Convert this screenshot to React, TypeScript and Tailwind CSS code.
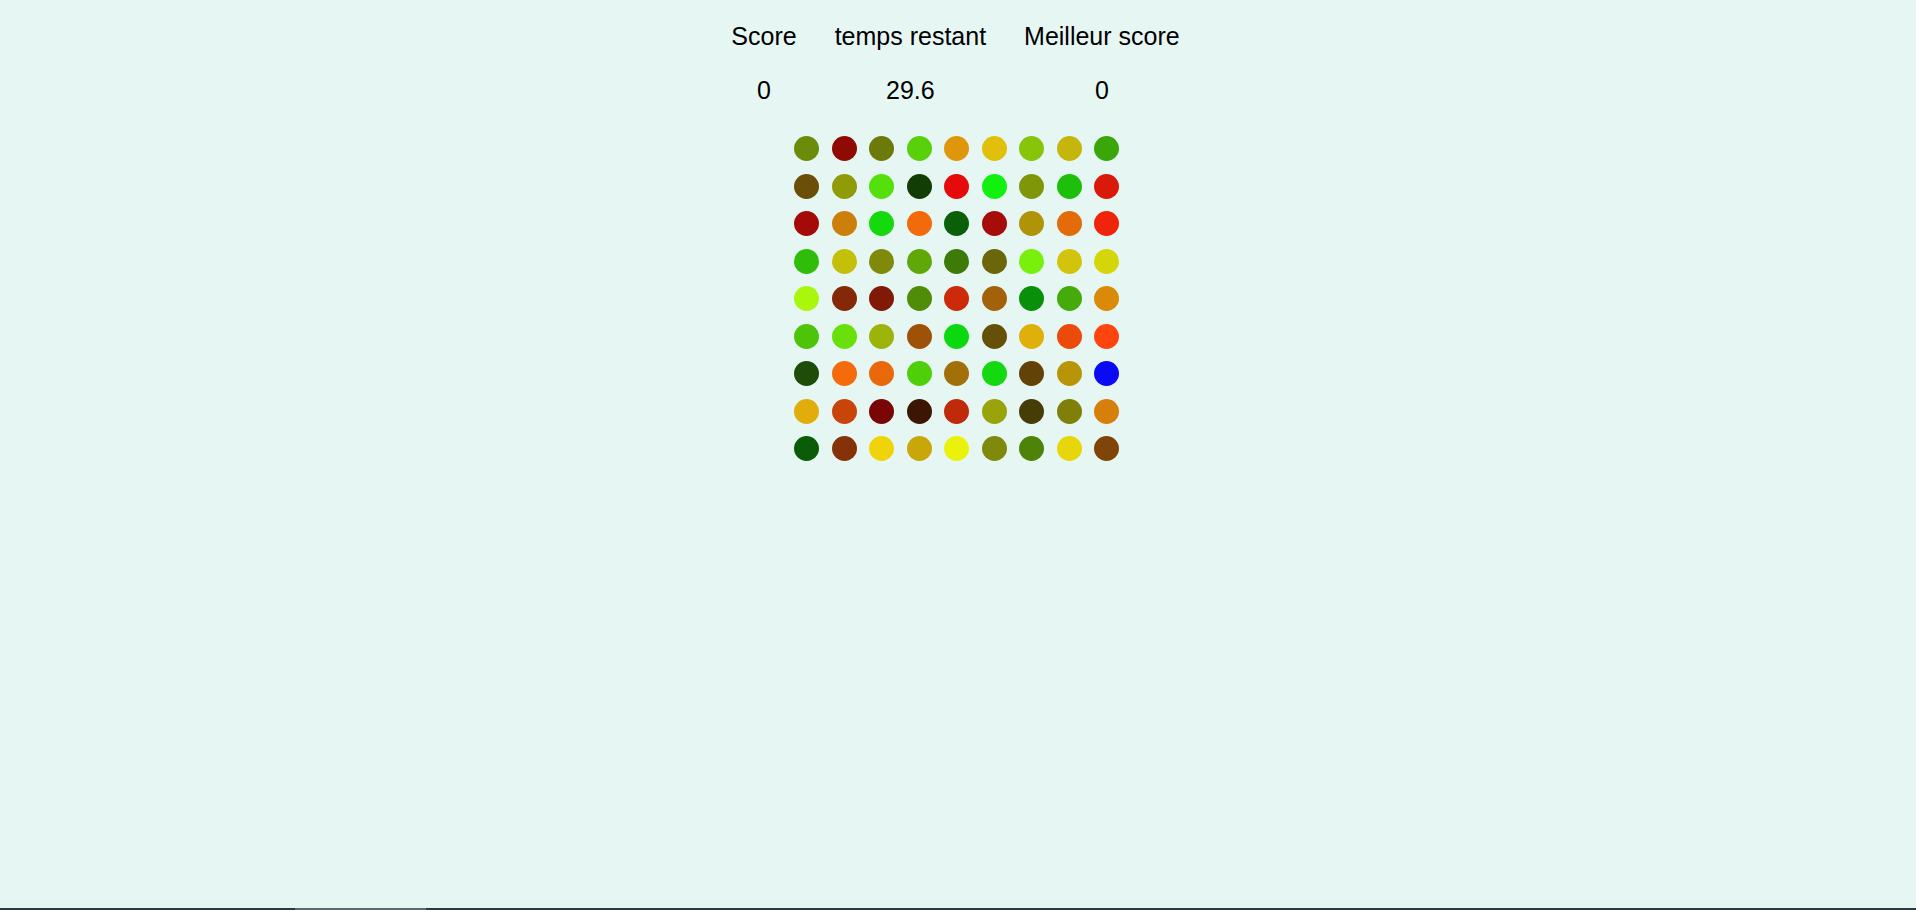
import React from "react";

const colors: string[][] = [
  ["#6b8c0a", "#8f0a03", "#6b7a0a", "#59d10a", "#e0960a", "#e0c00a", "#88c40a", "#c4b60a", "#3aa60a"],
  ["#6b4e08", "#8f9c08", "#55e00c", "#123d05", "#e60a0a", "#12f00f", "#7f9609", "#1ebf0a", "#d91a0a"],
  ["#a30a08", "#cc7f0a", "#14d90c", "#f26a0a", "#0a5f08", "#a50c0a", "#b09408", "#e36b0a", "#f0240a"],
  ["#30bd0a", "#c4c00a", "#7f8a0a", "#60a80a", "#3e7a08", "#6b660a", "#78f00c", "#d1c40a", "#d4d60a"],
  ["#a8f70c", "#852808", "#801a06", "#4f8c08", "#cc2a08", "#a3620a", "#0a8f0a", "#45ab0a", "#d98a08"],
  ["#4dc40a", "#6ae00a", "#9cb30a", "#9e5208", "#0ad90f", "#665008", "#e0b00a", "#eb4a0a", "#ff450f"],
  ["#1d4d08", "#f56a0a", "#e8680a", "#4ecf0a", "#a17008", "#14d910", "#634208", "#b89408", "#0a0af5"],
  ["#e0ad0a", "#c9440a", "#7a0505", "#3d1505", "#bf2a0a", "#99a30a", "#453d05", "#7f7f0a", "#d67f0a"],
  ["#0b5c08", "#853208", "#f0d40a", "#c9a60a", "#ebf20a", "#7f8a0c", "#4f8208", "#e6d60a", "#7f4508"],
];

const stats = [
  { label: "Score", value: "0" },
  { label: "temps restant", value: "29.6" },
  { label: "Meilleur score", value: "0" },
];

export default function App() {
  return (
    <div
      className="min-h-screen flex flex-col bg-[#e6f7f3] text-black"
      style={{ fontFamily: '"Liberation Sans", Arial, sans-serif' }}
    >
      <div className="flex flex-col items-center pt-[22px] pr-[3px]">
        <div className="flex gap-[38px] pr-[2px] text-[25px] leading-[29px]">
          {stats.map((s) => (
            <div key={s.label} className="flex flex-col items-center gap-[25px]">
              <div>{s.label}</div>
              <div>{s.value}</div>
            </div>
          ))}
        </div>
        <div className="mt-[31px] grid grid-cols-9 gap-[12.5px]">
          {colors.flat().map((c, i) => (
            <div
              key={i}
              className="w-[25px] h-[25px] rounded-full"
              style={{ backgroundColor: c }}
            />
          ))}
        </div>
      </div>
      <div className="mt-auto h-[2px] bg-[#2b3b40] flex">
        <div className="ml-[295px] w-[131px] h-full bg-[#5b6b6f]" />
      </div>
    </div>
  );
}
